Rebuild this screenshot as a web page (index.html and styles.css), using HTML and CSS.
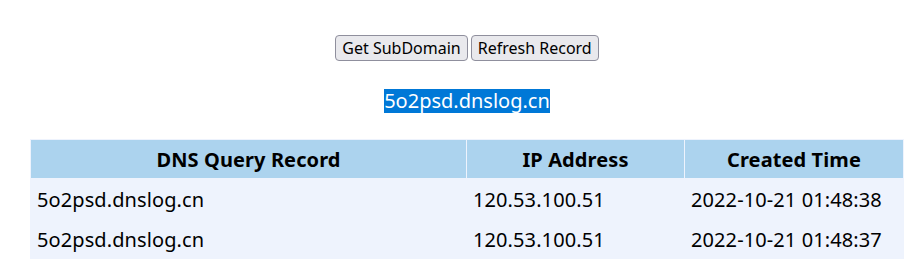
FILE: index.html
```html
<!DOCTYPE html>
<html>
<head>
<meta charset="utf-8">
<link rel="stylesheet" href="styles.css">
</head>
<body>
<div class="wrap">
  <div class="actions">
    <button class="btn">Get SubDomain</button>
    <button class="btn">Refresh Record</button>
  </div>
  <div class="domain-line"><span class="domain">5o2psd.dnslog.cn</span></div>
  <table class="records">
    <thead>
      <tr><th class="c1">DNS Query Record</th><th class="c2">IP Address</th><th class="c3">Created Time</th></tr>
    </thead>
    <tbody>
      <tr><td>5o2psd.dnslog.cn</td><td>120.53.100.51</td><td>2022-10-21 01:48:38</td></tr>
      <tr><td>5o2psd.dnslog.cn</td><td>120.53.100.51</td><td>2022-10-21 01:48:37</td></tr>
    </tbody>
  </table>
</div>
</body>
</html>
```
FILE: styles.css
```css
html, body { margin: 0; padding: 0; background: #fff; }
body { font-family: "Noto Sans", "Open Sans", sans-serif; color: #000; }
.wrap { width: 874px; margin-left: 30px; padding-top: 35px; }
.actions { display: flex; justify-content: center; gap: 3px; }
.btn {
  font-family: "Noto Sans", sans-serif;
  font-size: 16px;
  height: 26px;
  padding: 0 6px;
  background: #e9e9ed;
  border: 1px solid #8f8f9d;
  border-radius: 4px;
  color: #000;
  line-height: 24px;
}
.domain-line { text-align: center; margin-top: 28px; height: 24px; }
.domain { background: #0078d7; color: #fff; font-size: 20px; line-height: 24px; display: inline-block; }
.records { width: 874px; margin-top: 26px; border-collapse: separate; border-spacing: 1px; background: #eef3fd; font-size: 20px; letter-spacing: 0.1px; }
.records th { background: #acd3ee; font-weight: bold; height: 38px; padding: 0; text-align: center; }
.records td { height: 39px; padding: 2px 0 0 6px; box-sizing: border-box; }
.c1 { width: 435px; }
.c2 { width: 217px; }
```
